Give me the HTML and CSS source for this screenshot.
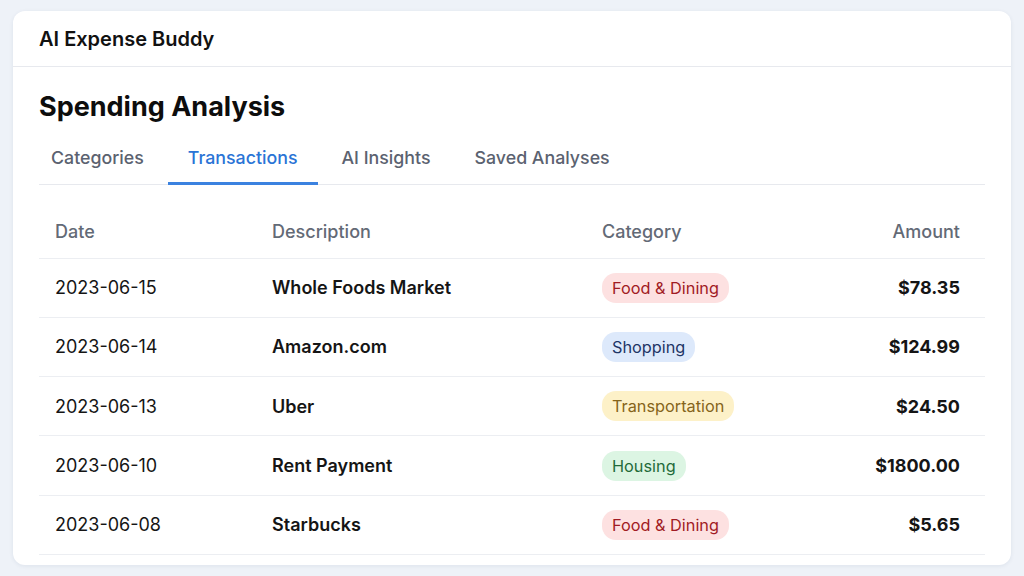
FILE: index.html
```html
<!DOCTYPE html>
<html lang="en">
<head>
    <meta charset="UTF-8">
    <meta name="viewport" content="width=device-width, initial-scale=1.0">
    <title>AI Expense Buddy</title>
    <link rel="stylesheet" href="styles.css">
</head>
<body>
    <div class="card">
        <header class="app-header">
            <h1>AI Expense Buddy</h1>
        </header>

        <main class="content">
            <h2 class="page-title">Spending Analysis</h2>

            <nav class="tabs">
                <span class="tab">Categories</span>
                <span class="tab active">Transactions</span>
                <span class="tab">AI Insights</span>
                <span class="tab">Saved Analyses</span>
            </nav>

            <table class="transactions">
                <thead>
                    <tr>
                        <th class="col-date">Date</th>
                        <th class="col-desc">Description</th>
                        <th class="col-cat">Category</th>
                        <th class="col-amount">Amount</th>
                    </tr>
                </thead>
                <tbody>
                    <tr>
                        <td>2023-06-15</td>
                        <td class="desc">Whole Foods Market</td>
                        <td><span class="badge food">Food &amp; Dining</span></td>
                        <td class="amount">$78.35</td>
                    </tr>
                    <tr>
                        <td>2023-06-14</td>
                        <td class="desc">Amazon.com</td>
                        <td><span class="badge shopping">Shopping</span></td>
                        <td class="amount">$124.99</td>
                    </tr>
                    <tr>
                        <td>2023-06-13</td>
                        <td class="desc">Uber</td>
                        <td><span class="badge transport">Transportation</span></td>
                        <td class="amount">$24.50</td>
                    </tr>
                    <tr>
                        <td>2023-06-10</td>
                        <td class="desc">Rent Payment</td>
                        <td><span class="badge housing">Housing</span></td>
                        <td class="amount">$1800.00</td>
                    </tr>
                    <tr>
                        <td>2023-06-08</td>
                        <td class="desc">Starbucks</td>
                        <td><span class="badge food">Food &amp; Dining</span></td>
                        <td class="amount">$5.65</td>
                    </tr>
                </tbody>
            </table>
        </main>
    </div>
</body>
</html>
```

FILE: styles.css
```css
* {
    margin: 0;
    padding: 0;
    box-sizing: border-box;
    font-family: 'Inter', 'Liberation Sans', sans-serif;
}
body {
    background-color: #eef2f8;
    color: #111;
    padding: 11px 13px;
}
.card {
    background-color: white;
    border-radius: 12px;
    box-shadow: 0 1px 4px rgba(30, 50, 90, 0.08);
    height: 554px;
    overflow: hidden;
}
.app-header {
    height: 56px;
    padding: 0 26px;
    display: flex;
    align-items: center;
    border-bottom: 1px solid #e7e9ee;
}
.app-header h1 {
    font-size: 20px;
    font-weight: 600;
    color: #111;
}
.content {
    padding: 23px 26px 0;
}
.page-title {
    font-size: 27px;
    font-weight: 700;
    color: #0d0d0d;
    margin-bottom: 16px;
}
.tabs {
    display: flex;
    gap: 4px;
    border-bottom: 1px solid #e7e9ee;
}
.tab {
    padding: 8px 20px 14px;
    font-size: 17.8px;
    font-weight: 500;
    color: #5b6270;
    border-bottom: 3px solid transparent;
    margin-bottom: -1px;
}
.tab:first-child {
    padding-left: 12px;
}
.tab.active {
    color: #2a74d6;
    border-bottom-color: #3b82e0;
}
.transactions {
    width: 100%;
    border-collapse: collapse;
    margin-top: 21px;
}
.transactions th,
.transactions td {
    font-size: 18px;
    text-align: left;
    border-bottom: 1px solid #eceef2;
    height: 59.3px;
    padding: 0 16px;
}
.transactions th {
    font-weight: 500;
    color: #636a76;
    height: 52px;
}
.transactions td {
    color: #151515;
}
.col-date {
    width: 217px;
}
.col-desc {
    width: 330px;
}
.transactions .col-amount,
.transactions .amount {
    text-align: right;
    padding-right: 25px;
}
.desc {
    font-weight: 600;
}
.amount {
    font-weight: 700;
}
.badge {
    display: inline-block;
    font-size: 16.3px;
    padding: 5px 10px;
    border-radius: 14px;
    font-weight: 400;
}
.food {
    background-color: #fde1e1;
    color: #a11b24;
}
.shopping {
    background-color: #dde9fb;
    color: #1d3566;
}
.transport {
    background-color: #fdf1c8;
    color: #85641a;
}
.housing {
    background-color: #dcf5e3;
    color: #1f6b3a;
}
```
